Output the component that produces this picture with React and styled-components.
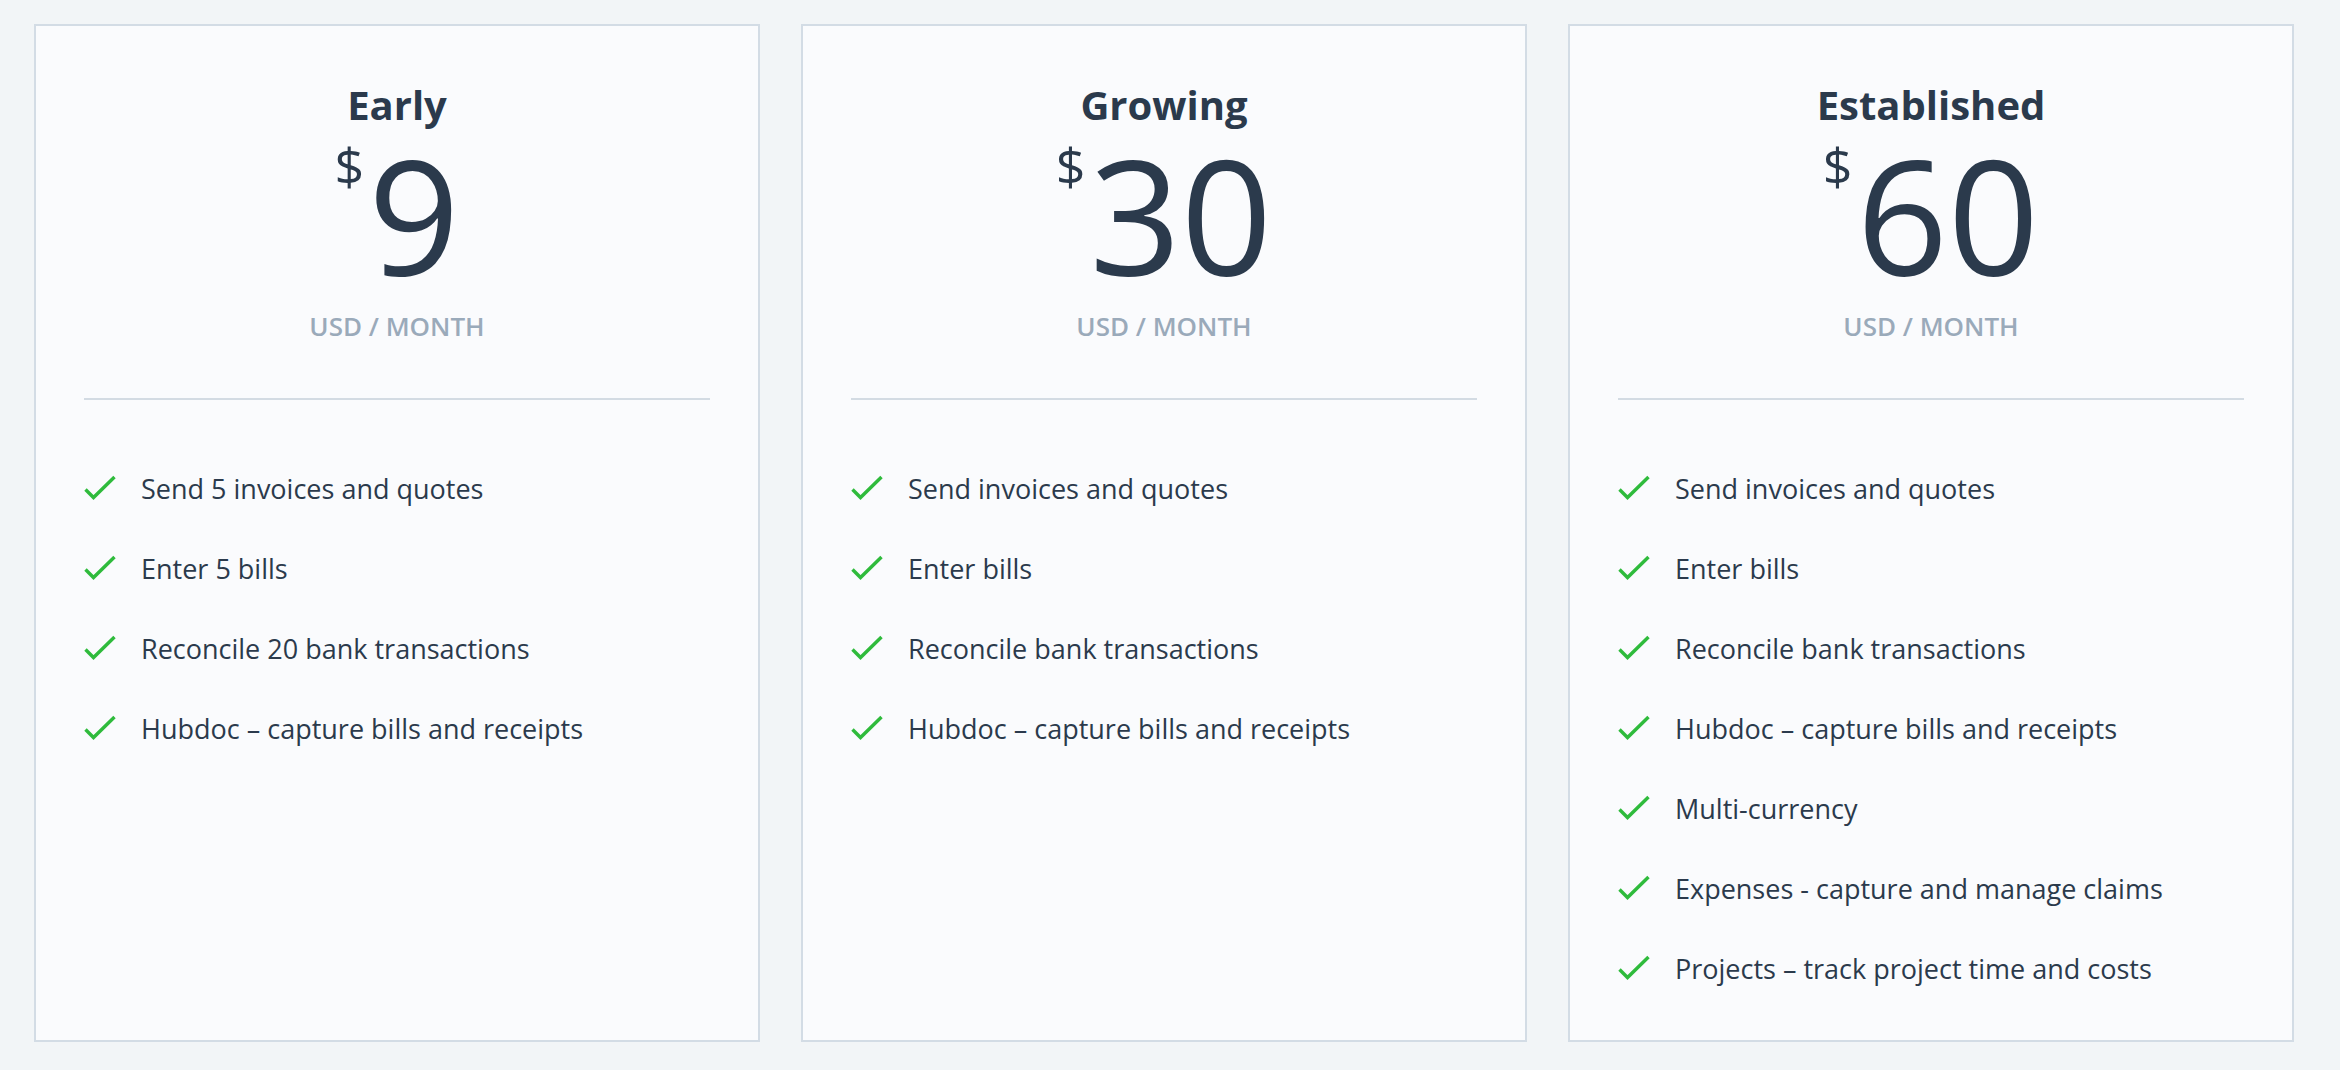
import React from 'react';
import styled, { createGlobalStyle } from 'styled-components';

const plans = [
  {
    name: 'Early',
    price: 9,
    features: [
      'Send 5 invoices and quotes',
      'Enter 5 bills',
      'Reconcile 20 bank transactions',
      'Hubdoc – capture bills and receipts'
    ]
  },
  {
    name: 'Growing',
    price: 30,
    features: [
      'Send invoices and quotes',
      'Enter bills',
      'Reconcile bank transactions',
      'Hubdoc – capture bills and receipts'
    ]
  },
  {
    name: 'Established',
    price: 60,
    features: [
      'Send invoices and quotes',
      'Enter bills',
      'Reconcile bank transactions',
      'Hubdoc – capture bills and receipts',
      'Multi-currency',
      'Expenses - capture and manage claims',
      'Projects – track project time and costs'
    ]
  }
];

const GlobalStyle = createGlobalStyle`
  html, body {
    margin: 0;
    padding: 0;
    background: #f2f5f7;
    font-family: "Open Sans", "Liberation Sans", sans-serif;
  }
`;

const Check = () => (
  <svg width="32" height="26" viewBox="0 0 32 26" fill="none">
    <polyline
      points="1.5,14.5 9.5,22.5 30.5,2"
      stroke="#2fbb3c"
      strokeWidth="3.4"
      strokeLinejoin="miter"
    />
  </svg>
);

const App = () => (
  <>
    <GlobalStyle />
    <PricingPage>
      {plans.map((plan) => (
        <PlanCard key={plan.name}>
          <PlanHeader>
            <PlanName>{plan.name}</PlanName>
            <PriceRow>
              <Currency>$</Currency>
              <Amount>{plan.price}</Amount>
            </PriceRow>
            <Period>USD / MONTH</Period>
          </PlanHeader>
          <Divider />
          <FeatureList>
            {plan.features.map((feature) => (
              <Feature key={feature}>
                <Check />
                <span>{feature}</span>
              </Feature>
            ))}
          </FeatureList>
        </PlanCard>
      ))}
    </PricingPage>
  </>
);

const PricingPage = styled.main`
  display: flex;
  align-items: stretch;
  gap: 41px;
  padding: 24px 46px 28px 34px;
  box-sizing: border-box;
  min-height: 1070px;
`;

const PlanCard = styled.section`
  flex: 1;
  display: flex;
  flex-direction: column;
  background: #fafbfd;
  border: 2px solid #d3dce5;
  padding: 55px 0 32px;
`;

const PlanHeader = styled.div`
  display: flex;
  flex-direction: column;
  align-items: center;
  color: #2b3a4c;
`;

const PlanName = styled.h2`
  margin: 0;
  font-size: 40px;
  line-height: 48px;
  font-weight: 700;
`;

const PriceRow = styled.div`
  display: flex;
  align-items: flex-start;
  margin-top: 4px;
`;

const Currency = styled.span`
  font-size: 52px;
  line-height: 1;
  margin-top: 6px;
  margin-right: 4px;
`;

const Amount = styled.span`
  font-size: 160px;
  line-height: 1;
  font-weight: 400;
`;

const Period = styled.div`
  margin-top: 17px;
  font-size: 26px;
  line-height: 32px;
  font-weight: 600;
  color: #9aaaba;
`;

const Divider = styled.div`
  height: 2px;
  background: #d3dbe3;
  margin: 56px 48px 0;
`;

const FeatureList = styled.ul`
  list-style: none;
  margin: 48px 0 0;
  padding: 0 48px;
`;

const Feature = styled.li`
  display: flex;
  align-items: center;
  gap: 25px;
  height: 80px;
  font-size: 27px;
  color: #2b3a4c;

  svg {
    flex: none;
  }
`;

export default App;
